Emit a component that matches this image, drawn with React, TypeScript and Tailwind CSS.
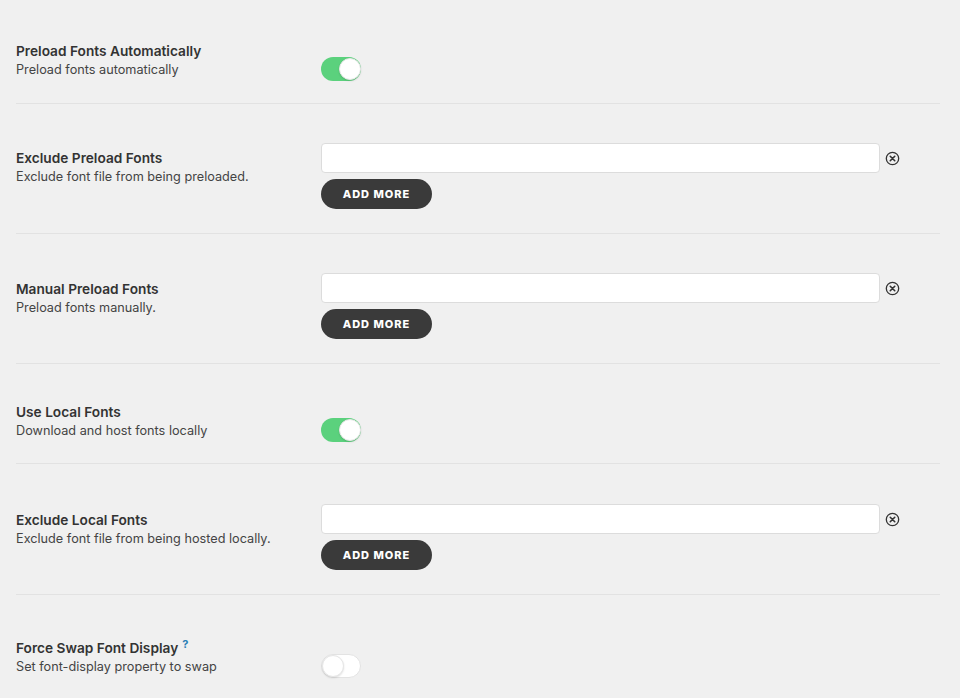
import React from "react";

type Row =
  | { kind: "toggle"; title: string; desc: string; on: boolean; help?: boolean; pt: string; pb: string }
  | { kind: "list"; title: string; desc: string; pt: string; pb: string; lt: string };

const rows: Row[] = [
  { kind: "toggle", title: "Preload Fonts Automatically", desc: "Preload fonts automatically", on: true, pt: "pt-[42px]", pb: "pb-[22px]" },
  { kind: "list", title: "Exclude Preload Fonts", desc: "Exclude font file from being preloaded.", pt: "pt-[39px]", pb: "pb-[24px]", lt: "pt-[45px]" },
  { kind: "list", title: "Manual Preload Fonts", desc: "Preload fonts manually.", pt: "pt-[39px]", pb: "pb-[24px]", lt: "pt-[46px]" },
  { kind: "toggle", title: "Use Local Fonts", desc: "Download and host fonts locally", on: true, pt: "pt-[39px]", pb: "pb-[21px]" },
  { kind: "list", title: "Exclude Local Fonts", desc: "Exclude font file from being hosted locally.", pt: "pt-[40px]", pb: "pb-[24px]", lt: "pt-[47px]" },
  { kind: "toggle", title: "Force Swap Font Display", desc: "Set font-display property to swap", on: false, help: true, pt: "pt-[44px]", pb: "pb-[20px]" },
];

const Toggle = ({ on }: { on: boolean }) => (
  <div
    className={`w-10 h-6 rounded-full flex items-center ${
      on ? "bg-[#5bd17d] justify-end" : "bg-white border border-[#e3e3e3] justify-start"
    }`}
  >
    <div className="w-[22px] h-[22px] rounded-full bg-white border border-[#e6e6e6] shadow-[0_1px_2px_rgba(0,0,0,0.12)]" />
  </div>
);

const ClearIcon = () => (
  <svg width="15" height="15" viewBox="0 0 16 16" fill="none" stroke="#333" strokeWidth="1.4">
    <circle cx="8" cy="8" r="6.6" />
    <path d="M5.6 5.6l4.8 4.8M10.4 5.6l-4.8 4.8" strokeWidth="1.7" strokeLinecap="round" />
  </svg>
);

const Label = ({ title, desc, help }: { title: string; desc: string; help?: boolean }) => (
  <div className="w-[305px] shrink-0 leading-[18px]">
    <div className="text-[13.7px] font-semibold text-[#333]">
      {title}
      {help && <sup className="ml-[4px] text-[11px] font-bold text-[#2a7fb5] top-[-0.5em]">?</sup>}
    </div>
    <div className="mt-[1px] text-[12.7px] text-[#444]">{desc}</div>
  </div>
);

export default function App() {
  return (
    <div
      className="w-[960px] h-[698px] overflow-hidden bg-[#f0f0f0]"
      style={{ fontFamily: 'Inter, "Liberation Sans", Arial, sans-serif' }}
    >
      <div className="pl-4 pr-5">
        {rows.map((row, i) => (
          <div key={i} className={`flex ${i < rows.length - 1 ? "border-b border-[#e2e2e2]" : ""} ${row.pb}`}>
            {row.kind === "toggle" ? (
              <div className={`flex items-start ${row.pt}`}>
                <Label title={row.title} desc={row.desc} help={row.help} />
                <div className="pt-[15px]">
                  <Toggle on={row.on} />
                </div>
              </div>
            ) : (
              <>
                <div className={row.lt}>
                  <Label title={row.title} desc={row.desc} />
                </div>
                <div className={`flex flex-col gap-[6px] ${row.pt}`}>
                  <div className="flex items-center gap-[5px]">
                    <input
                      type="text"
                      className="w-[559px] h-[30px] bg-white border border-[#dcdcdc] rounded-[4px] outline-none px-2 text-sm"
                    />
                    <ClearIcon />
                  </div>
                  <button className="w-[111px] h-[30px] rounded-full bg-[#3a3a3a] text-white text-[11px] font-extrabold tracking-[0.09em]">
                    ADD MORE
                  </button>
                </div>
              </>
            )}
          </div>
        ))}
      </div>
    </div>
  );
}
